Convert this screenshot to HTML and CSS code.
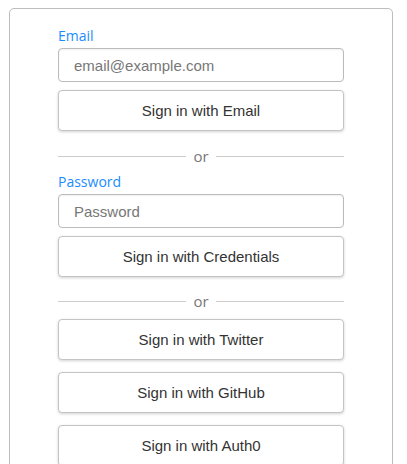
FILE: index.html
```html
<!DOCTYPE html>
<html>
<head>
<meta charset="utf-8">
<link rel="stylesheet" href="styles.css">
</head>
<body>
<div class="card">
  <form class="form">
    <label class="label">Email</label>
    <input class="input" type="text" placeholder="email@example.com">
    <button class="btn" type="button">Sign in with Email</button>
  </form>
  <div class="divider"><span class="line"></span><span class="or">or</span><span class="line"></span></div>
  <form class="form">
    <label class="label">Password</label>
    <input class="input" type="password" placeholder="Password">
    <button class="btn" type="button">Sign in with Credentials</button>
  </form>
  <div class="divider divider-b"><span class="line"></span><span class="or">or</span><span class="line"></span></div>
  <div class="social">
    <button class="btn" type="button">Sign in with Twitter</button>
    <button class="btn" type="button">Sign in with GitHub</button>
    <button class="btn" type="button">Sign in with Auth0</button>
  </div>
</div>
</body>
</html>
```
FILE: styles.css
```css
html, body { margin: 0; padding: 0; background: #fff; }
body { padding: 8px 15px 0 9px; font-family: "Liberation Sans", Arial, sans-serif; }
.card {
  border: 1px solid #bdbdbd;
  border-radius: 5px;
  padding: 17px 48px 40px;
  width: 286px;
  margin: 0 auto;
  box-sizing: content-box;
}
.form { display: flex; flex-direction: column; }
.label {
  font-family: "Open Sans", "Noto Sans", sans-serif;
  font-size: 14px;
  line-height: 20px;
  color: #1a8cff;
  margin-bottom: 2px;
}
.input {
  height: 34px;
  box-sizing: border-box;
  border: 1px solid #bbb;
  border-radius: 4px;
  padding: 0 15px;
  font-family: "Liberation Sans", Arial, sans-serif;
  font-size: 15px;
  color: #333;
  box-shadow: inset 0 1px 2px rgba(0,0,0,0.06);
  outline: none;
  margin: 0;
}
.input::placeholder { color: #777; }
.btn {
  height: 41px;
  box-sizing: border-box;
  border: 1px solid #c4c4c4;
  border-radius: 4px;
  background: #fff;
  font-family: "Liberation Sans", Arial, sans-serif;
  font-size: 15px;
  color: #333;
  box-shadow: 0 1px 3px rgba(0,0,0,0.18);
  margin: 8px 0 0;
  width: 100%;
  padding: 0;
}
.divider {
  display: flex;
  align-items: center;
  gap: 7px;
  height: 20px;
  margin: 15px 0 6px;
}
.divider-b { margin: 14px 0 0; }
.line { flex: 1; height: 1px; background: #ccc; }
.or {
  font-family: "Open Sans", "Noto Sans", sans-serif;
  font-size: 15px;
  color: #777;
  line-height: 20px;
}
.social { display: flex; flex-direction: column; gap: 12px; margin-top: 0; }
.social .btn { margin: 0; }
.divider-b + .social { margin-top: 8px; }
```
